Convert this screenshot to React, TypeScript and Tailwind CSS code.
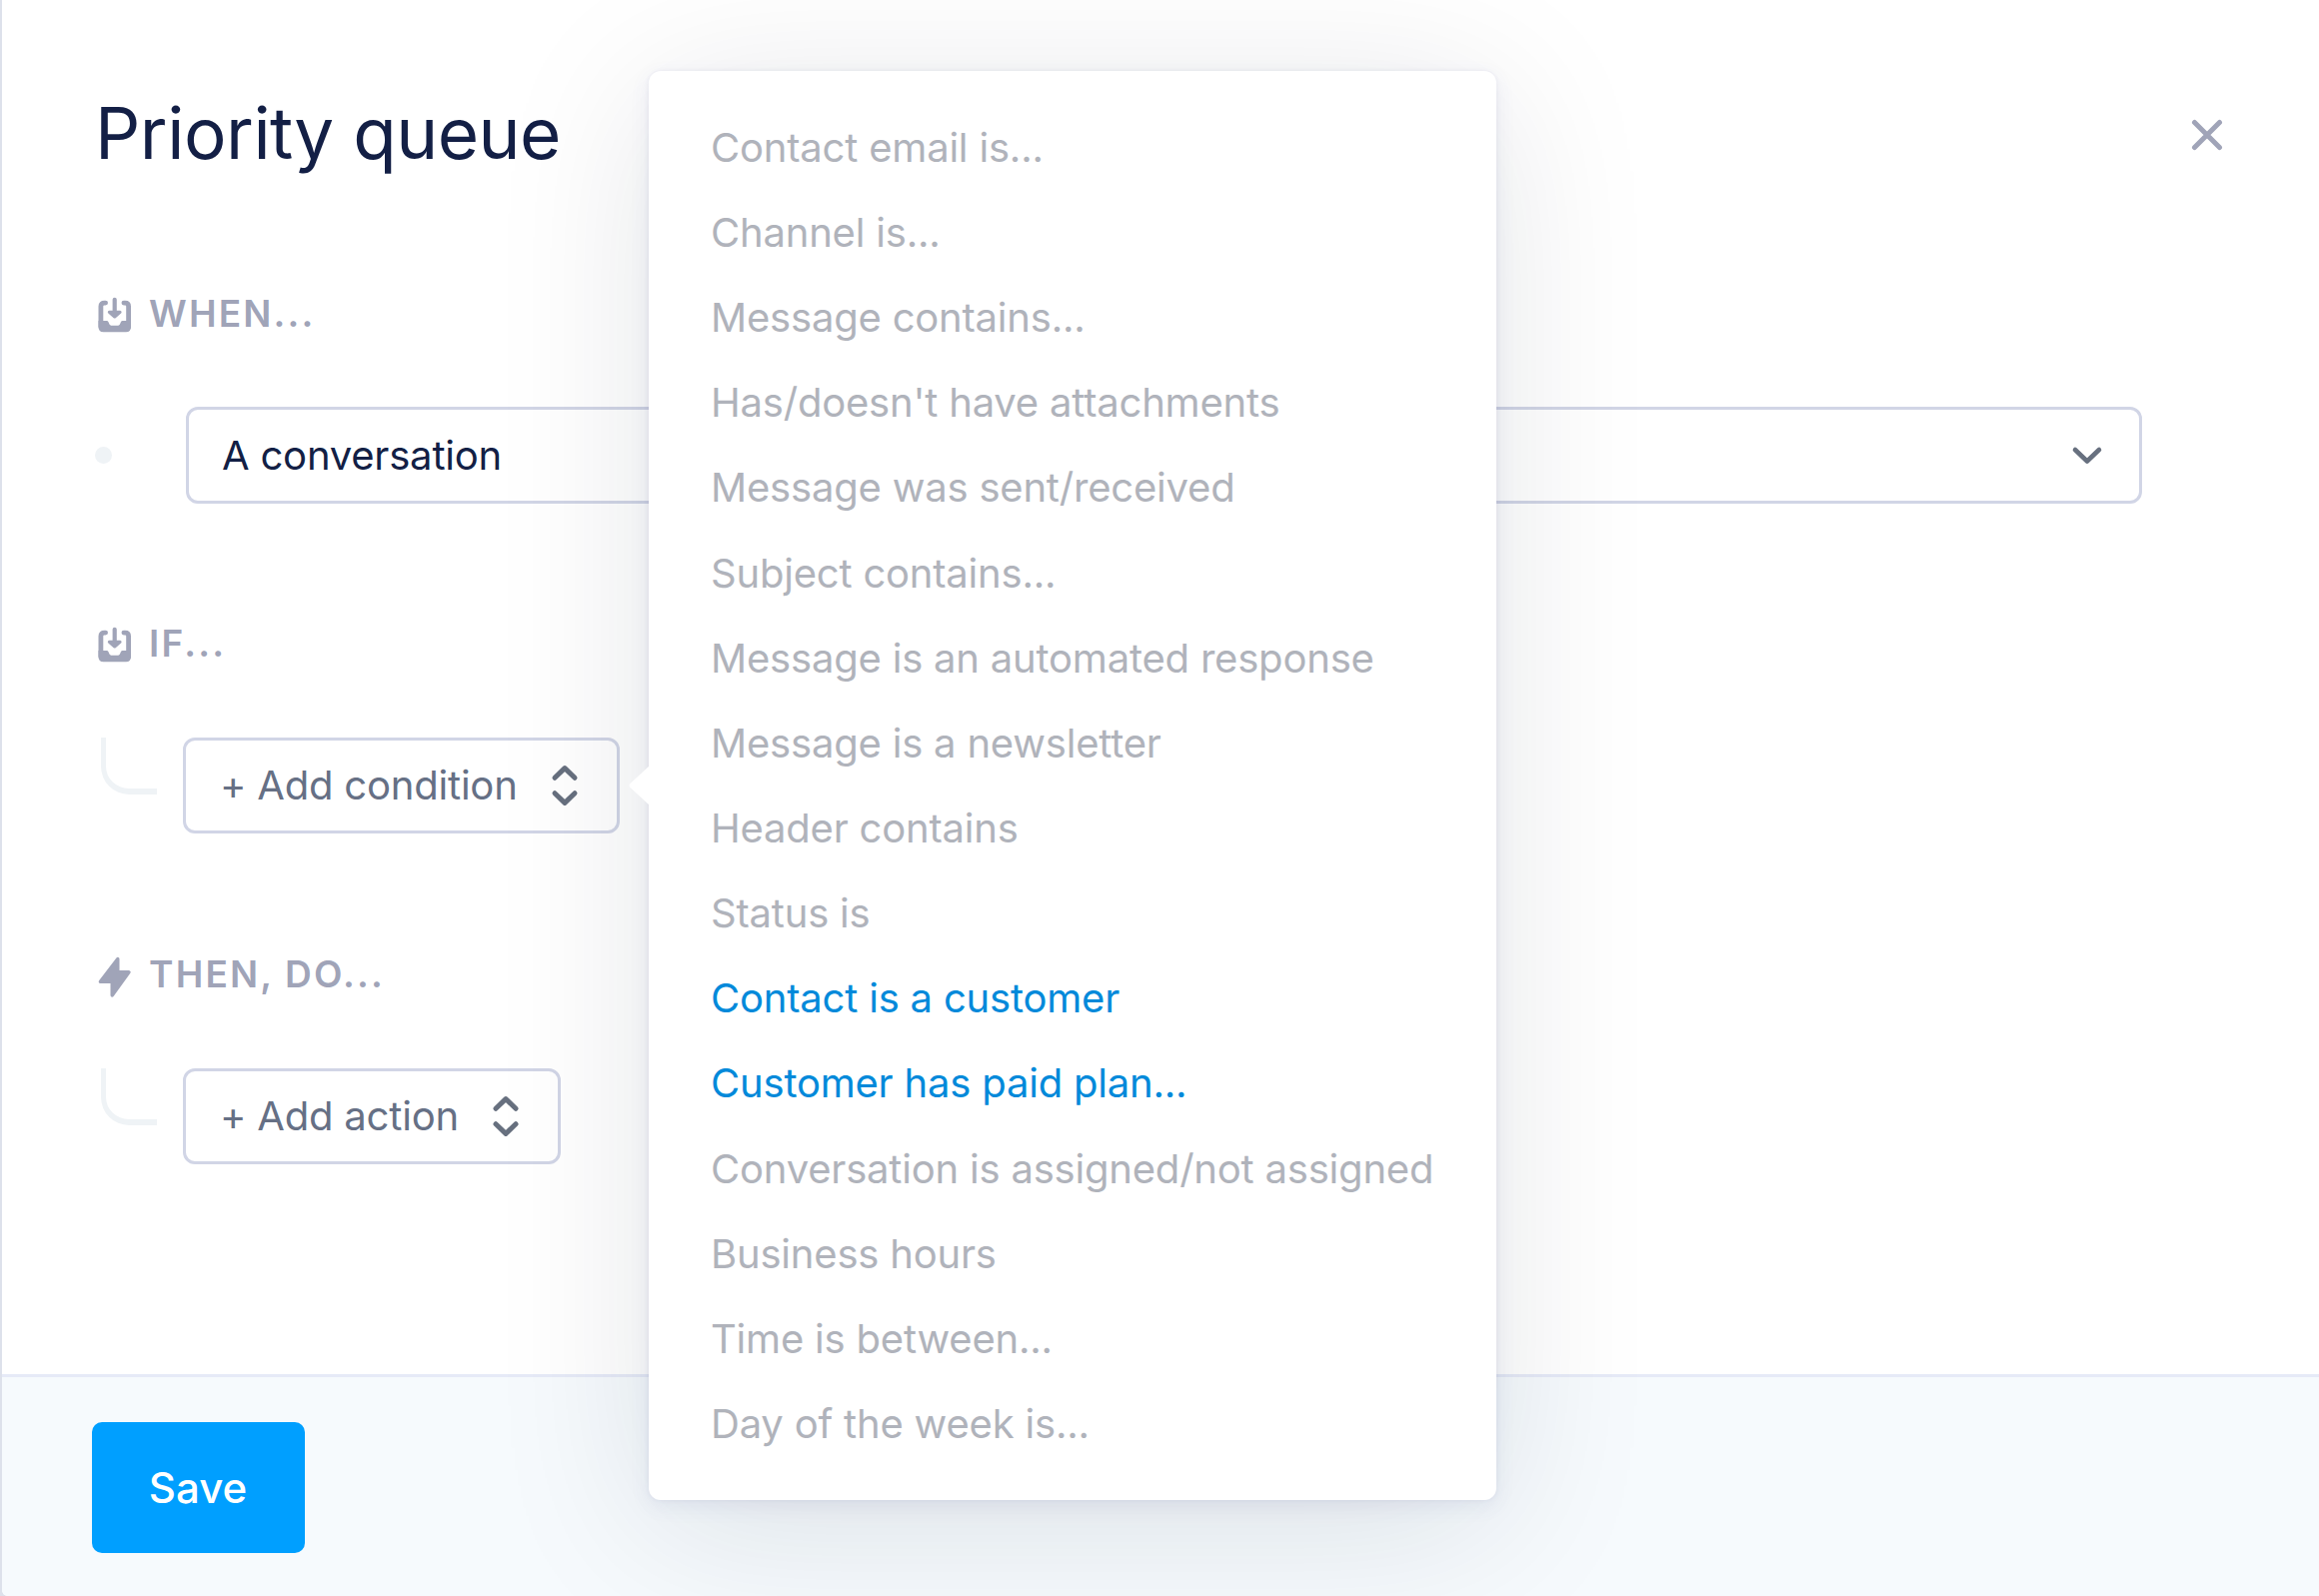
import React from 'react';

const conditions = [
  'Contact email is...',
  'Channel is...',
  'Message contains...',
  "Has/doesn't have attachments",
  'Message was sent/received',
  'Subject contains...',
  'Message is an automated response',
  'Message is a newsletter',
  'Header contains',
  'Status is',
  'Contact is a customer',
  'Customer has paid plan...',
  'Conversation is assigned/not assigned',
  'Business hours',
  'Time is between...',
  'Day of the week is...',
];

const highlighted = new Set(['Contact is a customer', 'Customer has paid plan...']);

function InboxIcon() {
  return (
    <svg className="block h-[36px] w-[34px]" viewBox="0 0 34 36" fill="none">
      <path
        d="M7.6 6.1H6.4Q2.9 6.1 2.9 9.4V30M25.9 6.1H27.1Q30.6 6.1 30.6 9.4V30"
        stroke="#a0a4b8"
        strokeWidth="4.8"
        strokeLinecap="round"
      />
      <path
        d="M0.5 24H8.8Q10 24 10.5 25.2L11.5 27.6Q12 28.7 13.2 28.7H20.2Q21.4 28.7 21.9 27.6L22.9 25.2Q23.4 24 24.6 24H33V30.3Q33 35.3 28 35.3H5.5Q0.5 35.3 0.5 30.3Z"
        fill="#a0a4b8"
      />
      <path d="M16.7 2.8V17" stroke="#a0a4b8" strokeWidth="4.2" strokeLinecap="round" />
      <path d="M11.3 15.3H22.1L16.7 20Z" fill="#a0a4b8" stroke="#a0a4b8" strokeWidth="3" strokeLinejoin="round" />
    </svg>
  );
}

function BoltIcon() {
  return (
    <svg className="block h-[46px] w-[34px]" viewBox="0 0 34 46">
      <path
        d="M19.8 6.5L2.4 29.4H14.2V43L31 19.8H19.8Z"
        fill="#a0a4b8"
        stroke="#a0a4b8"
        strokeWidth="3.4"
        strokeLinejoin="round"
      />
    </svg>
  );
}

function SectionTitle({ icon, children }: { icon: React.ReactNode; children: React.ReactNode }) {
  return (
    <div className="flex h-[50px] items-center">
      <span className="flex w-[51px] shrink-0 pt-[4px]">{icon}</span>
      <h2 className="text-[37px] font-semibold leading-none tracking-[2.2px] text-[#a0a4b8]">{children}</h2>
    </div>
  );
}

function AddRow({ label, children }: { label: string; children?: React.ReactNode }) {
  return (
    <div className="flex h-[96px] items-start">
      <div className="ml-[3px] h-[57px] w-[56px] rounded-bl-[28px] border-b-[6px] border-l-[5px] border-[#eff3f6]" />
      <div className="relative ml-[26px]">
        <button className="flex h-[96px] items-center rounded-[12px] border-[3px] border-[#d1d5e6] pl-[34px] pr-[38px] text-[40px] tracking-[-0.2px] text-[#667085]">
          <span className="whitespace-nowrap">{label}</span>
          <svg className="ml-[33px] block h-[42px] w-[28px]" viewBox="0 0 28 42" fill="none">
            <path
              d="M4 13.3L14 3.6L24 13.3M4 28.7L14 38.4L24 28.7"
              stroke="#67707f"
              strokeWidth="5"
              strokeLinecap="round"
              strokeLinejoin="round"
            />
          </svg>
        </button>
        {children}
      </div>
    </div>
  );
}

function ConditionMenu() {
  return (
    <div className="absolute left-[466px] top-[-667px] z-10 w-[848px] rounded-[12px] bg-white pb-[33.3px] pl-[62px] pt-[34.3px] shadow-[0_0_4px_rgba(60,70,140,0.08),0_6px_20px_rgba(80,90,170,0.09),0_24px_160px_rgba(20,30,40,0.115)]">
      <svg className="absolute left-[-20px] top-[695px] block h-[40px] w-[21px]" viewBox="0 0 21 40">
        <path d="M21 0L1 18.5Q0 20 1 21.5L21 40Z" fill="#ffffff" />
      </svg>
      <ul>
        {conditions.map((c) => (
          <li
            key={c}
            className={
              highlighted.has(c)
                ? 'flex h-[85.15px] items-center whitespace-nowrap text-[40px] tracking-[-0.2px] text-[#0089da]'
                : 'flex h-[85.15px] items-center whitespace-nowrap text-[40px] tracking-[-0.2px] text-[#b0b3bb]'
            }
          >
            {c}
          </li>
        ))}
      </ul>
    </div>
  );
}

export default function App() {
  return (
    <div className="h-[1597px] w-[2320px] overflow-hidden bg-[#dde1eb] font-['Inter',sans-serif]">
      <div className="ml-[2px] flex h-[1597px] flex-col rounded-bl-[6px] bg-white">
        <header className="flex h-[270px] items-center justify-between pl-[93px] pr-[96px]">
          <h1 className="whitespace-nowrap pb-[3px] text-[71px] leading-none tracking-[-0.48px] text-[#131f45]">
            Priority queue
          </h1>
          <svg className="block h-[32px] w-[32px]" viewBox="0 0 32 32" fill="none">
            <path d="M3.5 3.5L28.5 28.5M28.5 3.5L3.5 28.5" stroke="#a0a4b8" strokeWidth="5" strokeLinecap="round" />
          </svg>
        </header>

        <main className="flex grow flex-col pl-[96px]">
          <section className="mt-[18px]">
            <SectionTitle icon={<InboxIcon />}>WHEN...</SectionTitle>
            <div className="mt-[69px] flex items-center">
              <span className="ml-[-3px] size-[17px] rounded-full bg-[#eff3f6]" />
              <div className="ml-[74px] flex h-[97px] w-[1957px] items-center justify-between rounded-[12px] border-[3px] border-[#d1d5e6] pl-[33px] pr-[36px] text-[40px] tracking-[-0.2px] text-[#131f45]">
                <span>A conversation</span>
                <svg className="block h-[20px] w-[32px]" viewBox="0 0 32 20" fill="none">
                  <path d="M4 4L16 15.5L28 4" stroke="#67707f" strokeWidth="4.6" strokeLinecap="round" strokeLinejoin="round" />
                </svg>
              </div>
            </div>
          </section>

          <section className="mt-[114px]">
            <SectionTitle icon={<InboxIcon />}>IF...</SectionTitle>
            <div className="mt-[70px]">
              <AddRow label="+ Add condition">
                <ConditionMenu />
              </AddRow>
            </div>
          </section>

          <section className="mt-[115px]">
            <SectionTitle icon={<BoltIcon />}>THEN, DO...</SectionTitle>
            <div className="mt-[70px]">
              <AddRow label="+ Add action" />
            </div>
          </section>
        </main>

        <footer className="flex h-[222px] shrink-0 items-start rounded-bl-[6px] border-t-[3px] border-[#e6eaf7] bg-[#f6fafd] pl-[90px] pt-[45px]">
          <button className="flex h-[131px] w-[213px] items-center justify-center rounded-[10px] bg-[#009fff] pr-[1px] text-[42px] font-medium text-white">
            Save
          </button>
        </footer>
      </div>
    </div>
  );
}
